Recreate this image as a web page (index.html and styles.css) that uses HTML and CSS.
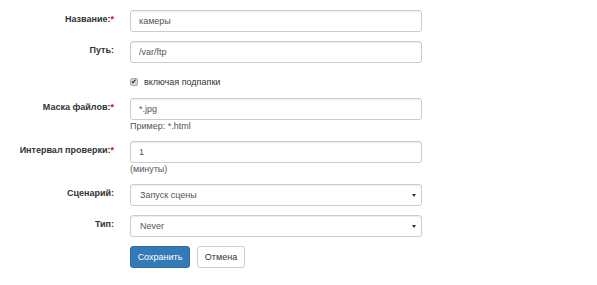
FILE: index.html
```html
<!DOCTYPE html>
<html>
    <head>
        <meta charset="utf-8" />
        <title>Папка</title>
        <link rel="stylesheet" href="styles.css">
    </head>
    <body>
        <form class="form-horizontal">
            <div class="form-group">
                <label class="control-label">Название:<span class="req">*</span></label>
                <div class="control"><input class="form-control" type="text" value="камеры"></div>
            </div>
            <div class="form-group">
                <label class="control-label">Путь:</label>
                <div class="control"><input class="form-control" type="text" value="/var/ftp"></div>
            </div>
            <div class="form-group check-group">
                <div></div>
                <div class="control">
                    <label class="checkbox"><span class="box">&#10004;</span>включая подпапки</label>
                </div>
            </div>
            <div class="form-group">
                <label class="control-label">Маска файлов:<span class="req">*</span></label>
                <div class="control">
                    <input class="form-control" type="text" value="*.jpg">
                    <span class="help-block">Пример: *.html</span>
                </div>
            </div>
            <div class="form-group">
                <label class="control-label">Интервал проверки:<span class="req">*</span></label>
                <div class="control">
                    <input class="form-control" type="text" value="1">
                    <span class="help-block">(минуты)</span>
                </div>
            </div>
            <div class="form-group">
                <label class="control-label">Сценарий:</label>
                <div class="control select-wrap">
                    <select class="form-control"><option>Запуск сцены</option></select>
                </div>
            </div>
            <div class="form-group">
                <label class="control-label">Тип:</label>
                <div class="control select-wrap">
                    <select class="form-control"><option>Never</option></select>
                </div>
            </div>
            <div class="form-group">
                <div></div>
                <div class="control buttons">
                    <button type="button" class="btn btn-primary">Сохранить</button>
                    <button type="button" class="btn btn-default">Отмена</button>
                </div>
            </div>
        </form>
    </body>
</html>
```

FILE: styles.css
```css
*,
*:before,
*:after {
  box-sizing: border-box;
}
html,
body {
  margin: 0;
  background: #fff;
  font-family: "Liberation Sans", Arial, sans-serif;
  font-size: 9px;
  color: #333;
}
.form-horizontal {
  padding-top: 10px;
}
.form-group {
  display: grid;
  grid-template-columns: 114px 292px;
  column-gap: 16px;
  margin-bottom: 9px;
}
.control-label {
  text-align: right;
  font-weight: bold;
  line-height: 12px;
  padding-top: 3px;
}
.req {
  color: #e00;
}
.form-control {
  display: block;
  width: 100%;
  height: 22px;
  margin: 0;
  padding: 0 8px;
  font-family: inherit;
  font-size: 9px;
  color: #555;
  background: #fff;
  border: 1px solid #ccc;
  border-radius: 3px;
  box-shadow: inset 0 1px 1px rgba(0, 0, 0, .075);
  outline: none;
}
select.form-control {
  appearance: none;
  -webkit-appearance: none;
  padding-left: 9px;
}
.select-wrap {
  position: relative;
}
.select-wrap:after {
  content: '';
  position: absolute;
  right: 6px;
  top: 10px;
  border-top: 3px solid #333;
  border-left: 2px solid transparent;
  border-right: 2px solid transparent;
}
.help-block {
  display: block;
  line-height: 12px;
  color: #555;
}
.check-group {
  margin-top: 12px;
  margin-bottom: 9px;
}
.checkbox {
  display: flex;
  align-items: center;
  height: 14px;
  color: #333;
}
.box {
  width: 8px;
  height: 8px;
  margin-right: 6px;
  border-radius: 2px;
  background: #d8d8d8;
  border: 1px solid #aaa;
  color: #222;
  font-size: 7px;
  line-height: 6px;
  text-align: center;
  overflow: hidden;
}
.buttons {
  display: flex;
  gap: 7px;
}
.btn {
  height: 22px;
  padding: 0 6px;
  font-family: inherit;
  font-size: 9px;
  border-radius: 3px;
  border: 1px solid;
  cursor: pointer;
}
.btn-primary {
  width: 60px;
  color: #fff;
  background: #337ab7;
  border-color: #2e6da4;
}
.btn-default {
  width: 48px;
  color: #333;
  background: #fff;
  border-color: #ccc;
}
```
